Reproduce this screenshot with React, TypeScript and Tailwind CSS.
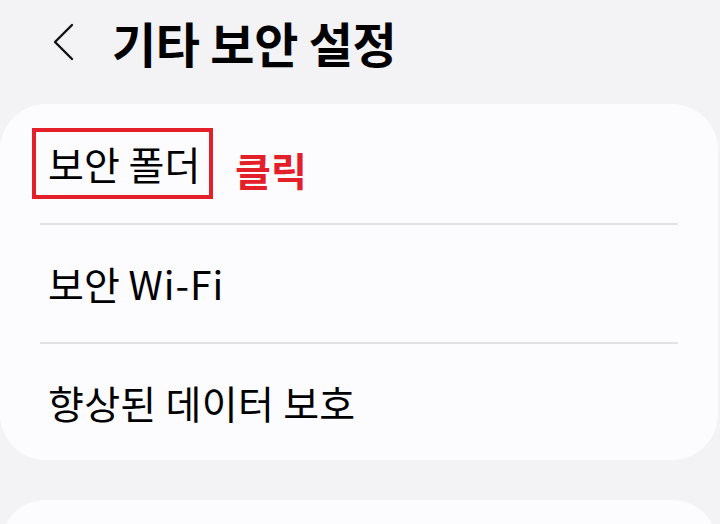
import React from "react";

export default function App() {
  const font = { fontFamily: '"Noto Sans CJK KR", "Noto Sans", sans-serif' };
  return (
    <div className="w-[720px] h-[524px] overflow-hidden bg-[#f3f3f5] text-black" style={font}>
      <div className="h-[104px] flex items-start pt-[13px]">
        <div className="w-[112px] flex items-center h-[58px] pl-[50px]">
          <svg width="26" height="40" viewBox="0 0 26 40" fill="none">
            <polyline points="22,3 5,20 22,37" stroke="#111" strokeWidth="2.4" strokeLinecap="round" strokeLinejoin="round" />
          </svg>
        </div>
        <div className="text-[48px] font-bold leading-[58px] tracking-[-0.3px]">기타 보안 설정</div>
      </div>
      <div className="mr-[2px] bg-[#fcfcfe] rounded-[46px] h-[356px] flex flex-col">
        <div className="h-[119px] flex items-center pl-[32px] pr-[40px]">
          <div className="border-[4px] border-[#e3202a] h-[71px] w-[181px] flex items-center pl-[12px]">
            <span className="text-[39px] leading-none">보안 폴더</span>
          </div>
          <span className="ml-[22px] mt-[12px] text-[39px] font-bold text-[#e3202a] leading-none">클릭</span>
        </div>
        <div className="mx-[40px] h-[2px] bg-[#e2e2e4]" />
        <div className="h-[117px] flex items-center pl-[48px]">
          <span className="text-[39px] leading-none">보안 <span className="tracking-[1px]">Wi-Fi</span></span>
        </div>
        <div className="mx-[40px] h-[2px] bg-[#e2e2e4]" />
        <div className="flex-1 flex items-center pl-[48px]">
          <span className="text-[39px] leading-none tracking-[0.3px]">향상된 데이터 보호</span>
        </div>
      </div>
      <div className="mt-[40px] mr-[2px] bg-[#fcfcfe] rounded-[46px] h-[200px]" />
    </div>
  );
}
